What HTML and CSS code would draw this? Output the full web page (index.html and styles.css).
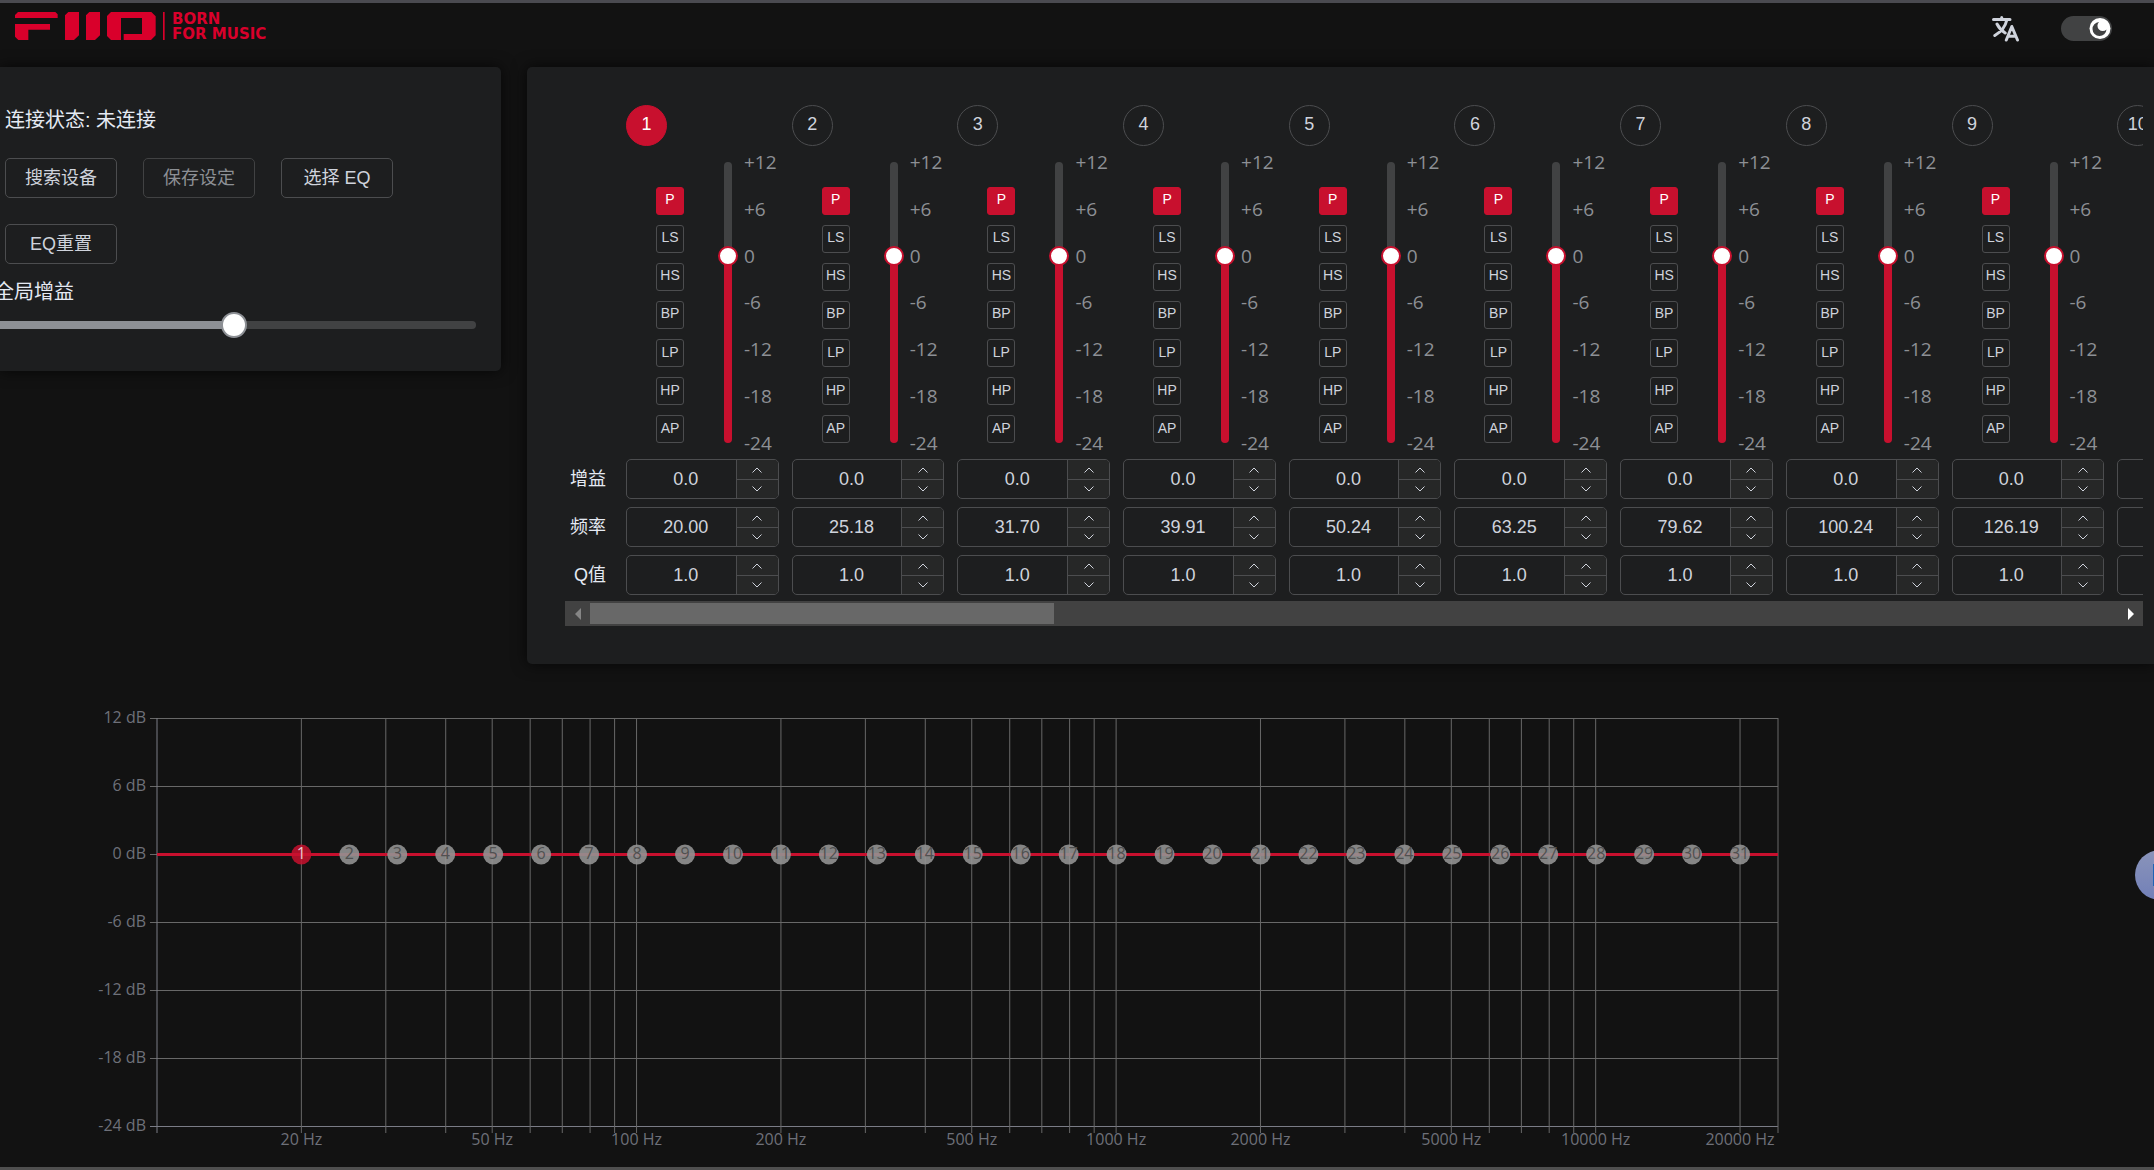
FILE: index.html
```html
<!DOCTYPE html>
<html lang="zh-CN">
<head>
<meta charset="utf-8">
<meta name="viewport" content="width=device-width, initial-scale=1">
<title>FiiO EQ</title>
<link rel="stylesheet" href="styles.css">
</head>
<body>
<header class="topbar">
  <a class="brand" href="#" aria-label="FiiO">
    <svg class="brand-mark" viewBox="45 36 450 84" aria-hidden="true">
      <path d="M54 36H166L173 43V54H45V45zM45 72H150V89H85V120H55L45 110zM205 36H237V106L222 120H195V46zM268 36H300V106L285 120H258V46zM333 36H454L467 49V106L453 120H371V102H426V54H363V120H333L321 108V48zM489 36H494V120H489z"/>
    </svg>
    <span class="brand-tagline">BORN<br>FOR MUSIC</span>
  </a>
  <div class="topbar-actions">
    <button class="icon-button" type="button" aria-label="切换语言">
      <svg class="translate-icon" viewBox="0 0 27 26" aria-hidden="true">
        <path d="M1.500 3.500H18M9.700 1.500V3.500M14.800 4C13.500 10 9 16 2.800 19.500M5 8C7 12 10 15 13.200 17M14.300 24L19.800 10.500L25.500 24M16.500 20.300H23.500"/>
      </svg>
    </button>
    <label class="theme-switch">
      <input type="checkbox" checked aria-label="深色模式">
      <svg viewBox="0 0 51 25" aria-hidden="true">
        <circle class="knob" cx="39" cy="12.500" r="10.500"/>
        <path class="moon" d="M38 6A7 7 0 1 0 45.500 13.500A5 5 0 0 1 38 6z"/>
      </svg>
    </label>
  </div>
</header>

<main>
  <div class="panels">
    <section class="panel device-panel">
      <p class="status">连接状态: 未连接</p>
      <div class="device-buttons">
        <button class="btn" type="button">搜索设备</button>
        <button class="btn" type="button" disabled>保存设定</button>
        <button class="btn" type="button">选择 EQ</button>
        <button class="btn" type="button">EQ重置</button>
      </div>
      <div class="master-gain">
        <label for="master">全局增益</label>
        <div class="slider slider-h">
          <input id="master" type="range" min="-12" max="12" value="0">
        </div>
      </div>
    </section>

    <section class="panel eq-panel">
      <div class="bands" id="bands">
        <div class="row-labels">
          <span>增益</span>
          <span>频率</span>
          <span>Q值</span>
        </div>
      </div>
      <div class="scrollbar">
        <button class="scroll-arrow" type="button" id="scroll-left" aria-label="向左滚动" disabled>
          <svg viewBox="0 0 6 12" aria-hidden="true"><path d="M6 0V12L0 6z"/></svg>
        </button>
        <div class="scroll-track"><div class="scroll-thumb"></div></div>
        <button class="scroll-arrow" type="button" id="scroll-right" aria-label="向右滚动">
          <svg viewBox="0 0 6 12" aria-hidden="true"><path d="M0 0V12L6 6z"/></svg>
        </button>
      </div>
    </section>
  </div>

  <section class="chart-area">
    <svg class="chart" id="chart" role="img" aria-label="频率响应曲线"></svg>
  </section>
</main>

<button class="float-button" type="button" aria-label="助手"><span></span></button>
<script src="app.js"></script>
</body>
</html>
```
FILE: styles.css
```css
* {
  box-sizing: border-box;
}

:root {
  --red: #c8102e;
  --panel: #1d1e1f;
  --line: #4c4d4f;
  --rail: #414243;
  --text: #e5eaf3;
  --text-soft: #cfd3dc;
  --text-dim: #8d9095;
}

body {
  margin: 0;
  min-height: 100vh;
  display: flex;
  flex-direction: column;
  overflow-x: hidden;
  background: #121212;
  border-top: 3px solid #4a4a50;
  border-bottom: 3px solid #4f4f4f;
  color: var(--text);
  font-family: "Liberation Sans", "Noto Sans CJK SC", sans-serif;
  font-size: 18px;
}

main {
  flex: 1;
}

button,
input {
  margin: 0;
  font: inherit;
  color: inherit;
}

button {
  padding: 0;
  background: none;
  border: 0;
  cursor: pointer;
}

/* Header */

.topbar {
  display: flex;
  justify-content: space-between;
  align-items: flex-start;
  height: 64px;
  padding: 9px 42px 0 15px;
}

.brand {
  display: flex;
  gap: 7px;
  color: #d9002b;
  text-decoration: none;
}

.brand-mark {
  width: 150px;
  height: 28px;
  fill: currentColor;
}

.brand-tagline {
  font: bold 15px/15px "DejaVu Sans", sans-serif;
}

.topbar-actions {
  display: flex;
  gap: 42px;
  padding-top: 4px;
}

.icon-button {
  height: 26px;
}

.translate-icon {
  display: block;
  width: 27px;
  height: 26px;
  fill: none;
  stroke: var(--text-soft);
  stroke-width: 3;
  stroke-linecap: round;
  stroke-linejoin: round;
}

.theme-switch {
  display: grid;
  width: 51px;
  height: 25px;
  border-radius: 13px;
  background: var(--rail);
}

.theme-switch input,
.theme-switch svg {
  grid-area: 1 / 1;
  width: 100%;
  height: 100%;
}

.theme-switch input {
  opacity: 0;
}

.knob {
  fill: #fff;
}

.moon {
  fill: var(--rail);
}

/* Panels */

.panels {
  display: grid;
  grid-template-columns: 501px minmax(0, 1fr);
  align-items: start;
  gap: 26px;
}

.panel {
  background: var(--panel);
  box-shadow: 0 0 15px rgba(0, 0, 0, 0.7);
}

.device-panel {
  padding: 39px 25px 42px 5px;
  border-radius: 0 5px 5px 0;
}

.status {
  margin: 0 0 24px;
  font-size: 20px;
  line-height: 28px;
}

.device-buttons {
  display: grid;
  grid-template-columns: repeat(3, 112px);
  gap: 26px;
}

.btn {
  height: 40px;
  border: 1px solid var(--line);
  border-radius: 5px;
  padding-bottom: 5px;
  color: var(--text-soft);
}

.btn:disabled {
  border-color: var(--rail);
  color: var(--text-dim);
}

.master-gain {
  margin: 14px 0 0 -13px;
}

.master-gain label {
  display: block;
  padding-left: 2px;
  font-size: 20px;
  line-height: 28px;
}

/* Sliders: the rail is drawn behind, the input runs half a thumb past each end */

.slider {
  display: grid;
}

.slider::before {
  content: "";
  grid-area: 1 / 1;
  border-radius: 4px;
}

.slider input {
  grid-area: 1 / 1;
  appearance: none;
  min-width: 0;
  background: none;
}

.slider-h {
  height: 8px;
  margin-top: 15px;
}

.slider-h::before {
  background: linear-gradient(to right, #8d9095 50%, var(--rail) 50%);
}

.slider-h input {
  height: 26px;
  margin: -9px -13px;
}

.slider-h input::-webkit-slider-thumb {
  appearance: none;
  width: 26px;
  height: 26px;
  border: 2px solid #8d9095;
  border-radius: 50%;
  background: #fff;
}

.slider-v {
  width: 8px;
  height: 281px;
}

.slider-v::before {
  background: linear-gradient(to bottom, var(--rail) 33%, var(--red) 33%);
}

.slider-v input {
  writing-mode: vertical-lr;
  direction: rtl;
  width: 20px;
  height: 301px;
  margin: -10px -6px;
}

.slider-v input::-webkit-slider-thumb {
  appearance: none;
  width: 20px;
  height: 20px;
  border: 2px solid var(--red);
  border-radius: 50%;
  background: #fff;
}

/* Equalizer bands */

.eq-panel {
  padding: 38px 11px 38px 38px;
  border-radius: 5px 0 0 5px;
}

.bands {
  display: flex;
  overflow-x: auto;
  padding-bottom: 6px;
  scrollbar-width: none;
}

.row-labels {
  flex: 0 0 61px;
  display: flex;
  flex-direction: column;
  justify-content: flex-end;
  align-items: flex-end;
  gap: 8px;
  padding-right: 20px;
  line-height: 40px;
}

.band {
  flex: 0 0 max(160px, 10.5%);
  padding-right: 13px;
}

.band-number {
  display: block;
  width: 41px;
  height: 41px;
  padding-bottom: 3px;
  border: 1px solid var(--line);
  border-radius: 50%;
  color: var(--text-soft);
}

.is-on,
.band-number.is-on {
  border-color: var(--red);
  background: var(--red);
  color: #fff;
}

.band-body {
  display: flex;
  align-items: center;
  margin: 2px 0;
}

.types {
  display: flex;
  flex-direction: column;
  justify-content: space-between;
  height: 282px;
  padding: 25px 0 0 30px;
}

.type {
  width: 28px;
  height: 28px;
  border: 1px solid var(--line);
  border-radius: 3px;
  padding-bottom: 3px;
  font-size: 14px;
  color: var(--text-soft);
}

.type.is-on {
  border-color: var(--red);
  color: #fff;
}

.band-body .slider-v {
  margin-left: 40px;
}

.scale {
  display: flex;
  flex-direction: column;
  justify-content: space-between;
  height: 309px;
  margin: 0 0 0 12px;
  padding: 0;
  list-style: none;
  font: 19px/28px "Open Sans", sans-serif;
  color: var(--text-dim);
}

.values {
  display: grid;
  gap: 8px;
}

.number {
  display: grid;
  grid-template-columns: minmax(0, 1fr) 42px;
  height: 40px;
  border: 1px solid var(--line);
  border-radius: 5px;
  overflow: hidden;
}

.number input {
  width: 100%;
  padding: 0 0 0 9px;
  border: 0;
  background: none;
  text-align: center;
  color: var(--text-soft);
}

.steps {
  display: grid;
  grid-template-rows: 1fr 1fr;
  border-left: 1px solid var(--line);
  background: #262727;
}

.steps button + button {
  border-top: 1px solid var(--line);
}

.steps svg {
  display: block;
  width: 10px;
  height: 6px;
  margin: 0 auto;
  fill: none;
  stroke: var(--text-soft);
  stroke-width: 1;
}

.scrollbar {
  display: grid;
  grid-template-columns: 25px minmax(0, 1fr) 25px;
  height: 25px;
  background: #424242;
}

.scroll-arrow {
  display: grid;
  place-items: center;
  color: #fff;
}

.scroll-arrow:disabled {
  color: #868686;
}

.scroll-arrow svg {
  width: 6px;
  height: 12px;
  fill: currentColor;
}

.scroll-track {
  padding: 2px 0;
}

.scroll-thumb {
  height: 21px;
  background: #686868;
}

/* Response chart */

.chart-area {
  padding: 54px 376px 41px 157px;
}

.chart {
  display: block;
  width: 100%;
  height: 408px;
  overflow: visible;
  font: 16px "Open Sans", sans-serif;
}

.grid-line {
  stroke: #686868;
  stroke-width: 1;
}

.axis-line {
  stroke: #7a7c86;
  stroke-width: 1;
}

.axis-text {
  fill: #6e7079;
}

.axis-text-x,
.dot-text {
  text-anchor: middle;
}

.axis-text-y {
  text-anchor: end;
}

.curve {
  stroke: var(--red);
  stroke-width: 3;
}

.dot {
  fill: #929292;
  fill-opacity: 0.9;
}

.dot-text {
  fill: #505050;
}

.dot.is-active {
  fill: var(--red);
  fill-opacity: 0.85;
}

.dot-text.is-active {
  fill: #e8c8ce;
}

/* Floating helper, mostly tucked behind the window edge */

.float-button {
  position: fixed;
  right: -31px;
  top: 850px;
  width: 50px;
  height: 50px;
  padding-left: 18px;
  border-radius: 50%;
  background: linear-gradient(#8a94ba, #7280b8);
}

.float-button span {
  display: block;
  width: 14px;
  height: 22px;
  background: #1f63b5;
}
```
FILE: app.js
```js
const TYPES = ["P", "LS", "HS", "BP", "LP", "HP", "AP"];
const SCALE = ["+12", "+6", "0", "-6", "-12", "-18", "-24"];
const BAND_COUNT = 31;
const FREQS = ["20.00", "25.18", "31.70", "39.91", "50.24", "63.25", "79.62", "100.24", "126.19"];

const bands = document.getElementById("bands");

function numberField(label, value) {
  return `<div class="number">
    <input type="text" inputmode="decimal" value="${value}" aria-label="${label}">
    <div class="steps">
      <button type="button" aria-label="${label} +"><svg viewBox="0 0 10 6"><path d="M0.500 5.500L5 1L9.500 5.500"/></svg></button>
      <button type="button" aria-label="${label} -"><svg viewBox="0 0 10 6"><path d="M0.500 0.500L5 5L9.500 0.500"/></svg></button>
    </div>
  </div>`;
}

for (let n = 1; n <= BAND_COUNT; n++) {
  const freq = FREQS[n - 1] || (20 * Math.pow(10, (n - 1) / 10)).toFixed(2);
  bands.insertAdjacentHTML("beforeend", `<div class="band">
    <button type="button" class="band-number${n === 1 ? " is-on" : ""}">${n}</button>
    <div class="band-body">
      <div class="types">${TYPES.map((t, i) => `<button type="button" class="type${i === 0 ? " is-on" : ""}">${t}</button>`).join("")}</div>
      <div class="slider slider-v"><input type="range" min="-24" max="12" value="0" aria-label="增益 ${n}"></div>
      <ul class="scale">${SCALE.map(s => `<li>${s}</li>`).join("")}</ul>
    </div>
    <div class="values">
      ${numberField("增益 " + n, "0.0")}
      ${numberField("频率 " + n, freq)}
      ${numberField("Q值 " + n, "1.0")}
    </div>
  </div>`);
}

/* Horizontal scrollbar */
const thumb = document.querySelector(".scroll-thumb");
const left = document.getElementById("scroll-left");
const right = document.getElementById("scroll-right");

function syncThumb() {
  const track = thumb.parentElement.clientWidth;
  thumb.style.width = (track * bands.clientWidth / bands.scrollWidth) + "px";
  thumb.style.marginLeft = (track * bands.scrollLeft / bands.scrollWidth) + "px";
  left.disabled = bands.scrollLeft <= 0;
  right.disabled = bands.scrollLeft + bands.clientWidth >= bands.scrollWidth - 1;
}
left.addEventListener("click", () => bands.scrollBy({ left: -160 }));
right.addEventListener("click", () => bands.scrollBy({ left: 160 }));
bands.addEventListener("scroll", syncThumb);
window.addEventListener("resize", syncThumb);
syncThumb();

/* Response chart on a logarithmic frequency axis */
const HEIGHT = 408;
const F_MIN = 10;
const F_MAX = 24000;
const LABELLED = [20, 50, 100, 200, 500, 1000, 2000, 5000, 10000, 20000];

const x = f => (100 * Math.log10(f / F_MIN) / Math.log10(F_MAX / F_MIN)).toFixed(3) + "%";
const y = db => Math.round(HEIGHT * (12 - db) / 36) + 0.5;

let out = "";
for (let db = 12; db >= -24; db -= 6) {
  const kind = db === -24 ? "axis-line" : "grid-line";
  out += `<line class="${kind}" x1="-7" x2="100%" y1="${y(db)}" y2="${y(db)}"/>`;
  out += `<text class="axis-text axis-text-y" x="-11" y="${y(db) + 4}">${db} dB</text>`;
}
const ticks = [10];
for (let decade = 10; decade <= 10000; decade *= 10) {
  for (let m = 2; m <= 10; m++) {
    if (decade * m <= 20000) ticks.push(decade * m);
  }
}
ticks.push(F_MAX);
for (const f of ticks) {
  const kind = f === F_MIN ? "axis-line" : "grid-line";
  out += `<line class="${kind}" x1="${x(f)}" x2="${x(f)}" y1="0" y2="${HEIGHT + 7}"/>`;
}
for (const f of LABELLED) {
  out += `<text class="axis-text axis-text-x" x="${x(f)}" y="${HEIGHT + 19}">${f} Hz</text>`;
}
out += `<line class="curve" x1="0" x2="100%" y1="${y(0)}" y2="${y(0)}"/>`;
for (let n = 1; n <= BAND_COUNT; n++) {
  const f = 20 * Math.pow(10, (n - 1) / 10);
  const on = n === 1 ? " is-active" : "";
  out += `<circle class="dot${on}" cx="${x(f)}" cy="${y(0)}" r="10"/>`;
  out += `<text class="dot-text${on}" x="${x(f)}" y="${y(0) + 4}">${n}</text>`;
}
document.getElementById("chart").innerHTML = out;
```
